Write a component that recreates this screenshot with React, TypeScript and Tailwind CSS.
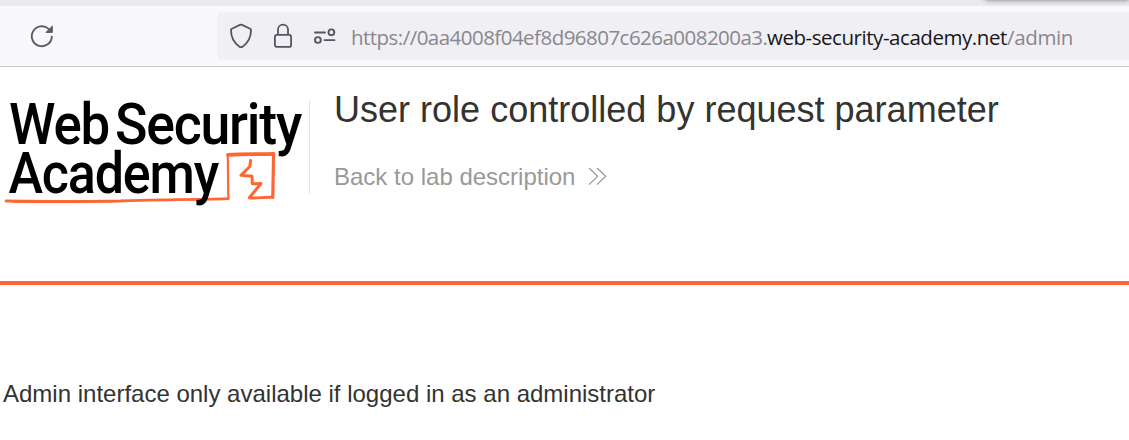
import React from "react";

function ReloadIcon() {
  return (
    <svg className="block h-[24px] w-[24px]" viewBox="0 0 24 24" fill="none">
      <path d="M18.6 4.9A10 10 0 1 0 21.8 12.6" stroke="#5b5b66" strokeWidth="1.9" strokeLinecap="round" />
      <path d="M22.4 2V8.5H15.8Z" fill="#5b5b66" stroke="#5b5b66" strokeWidth=".9" strokeLinejoin="round" />
    </svg>
  );
}

function ShieldIcon() {
  return (
    <svg className="block h-[26px] w-[24px]" viewBox="0 0 24 26" fill="none" stroke="#55555f" strokeWidth="1.8" strokeLinejoin="round">
      <path d="M11 1.9Q12 1.5 13 1.9L21.2 5.7Q22 6.1 22 7C22.1 15 18 20.7 13.2 23.9Q12 24.5 10.8 23.9C6 20.7 1.9 15 2 7Q2 6.1 2.8 5.7Z" />
    </svg>
  );
}

function LockIcon() {
  return (
    <svg className="block h-[26px] w-[20px]" viewBox="0 0 20 26" fill="none" stroke="#55555f" strokeWidth="1.8">
      <rect x="1.9" y="11.9" width="16.2" height="12" rx="2" />
      <path d="M5 12V6.6a5 5 0 0 1 10 0V12" />
    </svg>
  );
}

function PermissionsIcon() {
  return (
    <svg className="block h-[18px] w-[24px]" viewBox="0 0 24 18" fill="none" stroke="#55555f" strokeWidth="1.9" strokeLinecap="round">
      <path d="M2 5.5H12M11.5 13.1H21.5" />
      <circle cx="18.4" cy="5.3" r="2.9" />
      <circle cx="4.9" cy="13" r="2.9" />
    </svg>
  );
}

function Logo() {
  return (
    <svg className="block h-[120px] w-[309px] shrink-0 overflow-visible" viewBox="0 90 309 120">
      <g fill="none" stroke="#ff6633" strokeLinejoin="round" strokeLinecap="round">
        <path d="M6 201C50 201.5 92 201.6 120 201C145 199.5 190 199.8 228.3 198.6" strokeWidth="2.8" />
        <path d="M14 202C60 202.8 100 202 125 200.5" strokeWidth="1.5" />
        <path d="M228.3 198.6L227.8 155" strokeWidth="2.2" />
        <path d="M228 154.8C242 153.9 260 154.4 273.5 154" strokeWidth="3.8" />
        <path d="M273.6 154L272.8 197.3" strokeWidth="3.2" />
        <path d="M250.6 160.5L249.8 166.5L241 175.3L252 176.3L252.3 183.8L261 183.5L249.3 197.8C256 198.8 264 196.7 272.5 197.2" strokeWidth="3" />
      </g>
      <g fill="#000" fontFamily="Roboto, sans-serif" fontSize="57.5" fontWeight="500" letterSpacing="-1.3">
        <text x="9" y="143.8" textLength="100" lengthAdjust="spacingAndGlyphs">Web</text>
        <text x="115" y="143.8" textLength="186" lengthAdjust="spacingAndGlyphs">Security</text>
        <text x="8.5" y="192.6" textLength="209.5" lengthAdjust="spacingAndGlyphs">Academy</text>
      </g>
    </svg>
  );
}

export default function App() {
  return (
    <div className="h-[440px] w-full overflow-hidden bg-white font-['Liberation_Sans',sans-serif] text-[#333332]">
      <header className="h-[67px] border-b border-[#cacace] bg-[#f9f9fb]">
        <div className="flex h-[6px] justify-end overflow-hidden bg-[#eae9ed]">
          <div className="-mt-[10px] h-[10px] w-[146px] rounded-bl-md bg-white shadow-[0_0_5px_rgba(0,0,0,0.5)]" />
        </div>
        <div className="flex h-[60px] items-center pl-[30px]">
          <ReloadIcon />
          <div className="ml-[163px] flex h-[48px] flex-1 items-center rounded-l-[5px] bg-[#f0eff4] pl-[12px]">
            <ShieldIcon />
            <div className="ml-[20px]"><LockIcon /></div>
            <div className="ml-[20px]"><PermissionsIcon /></div>
            <div className="ml-[14px] flex whitespace-nowrap pt-px font-['Open_Sans',sans-serif] text-[20.5px] leading-[28px] text-[#88888e]">
              <span className="w-[416px] tracking-[-0.53px]">https://0aa4008f04ef8d96807c626a008200a3.</span>
              <span className="w-[240px] tracking-[-0.45px] text-[#17161c]">web-security-academy.net</span>
              <span className="tracking-[-0.35px]">/admin</span>
            </div>
          </div>
        </div>
      </header>
      <section className="flex h-[214px] pt-[23px]">
        <Logo />
        <div className="mt-[11px] h-[93px] w-px shrink-0 bg-[#e3e3e5]" />
        <div className="ml-[24px]">
          <h1 className="whitespace-nowrap text-[36px] leading-[40px] tracking-[0.01px]">User role controlled by request parameter</h1>
          <a className="mt-[33px] flex items-center whitespace-nowrap text-[24px] leading-[28px] text-[#999998]">
            Back to lab description
            <svg className="ml-[13px] block h-[20px] w-[19px]" viewBox="0 0 19 20" fill="none" stroke="#999998" strokeWidth="1.2">
              <path d="M1 1L9.7 9.3L1 17.6M9 1L17.7 9.3L9 17.6" />
            </svg>
          </a>
        </div>
      </section>
      <div className="h-[4px] bg-[#ff6633]" />
      <p className="whitespace-nowrap pl-[3px] pt-[95px] text-[24px] leading-[28px]">
        Admin interface only available if logged in as an administrator
      </p>
    </div>
  );
}
